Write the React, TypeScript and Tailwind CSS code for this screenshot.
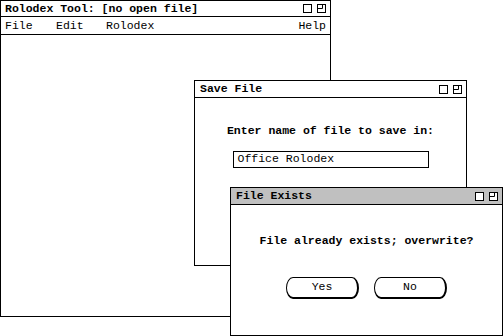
import React from "react";

const mono = { fontFamily: '"Liberation Mono", "DejaVu Sans Mono", monospace' };

function WinIcons() {
  return (
    <div className="flex items-center gap-[5px] pr-[4px]">
      <svg width="9" height="9" viewBox="0 0 9 9" className="block">
        <rect x="0.5" y="0.5" width="8" height="8" fill="white" stroke="black" />
      </svg>
      <svg width="9" height="9" viewBox="0 0 9 9" className="block">
        <rect x="0.5" y="0.5" width="8" height="8" fill="white" stroke="black" />
        <path d="M0.5 4.5 H5.5 V0.5" fill="none" stroke="black" />
      </svg>
    </div>
  );
}

function TitleBar({ title, gray }: { title: string; gray?: boolean }) {
  return (
    <div
      className={
        "h-[17px] flex items-center justify-between border-b border-black pl-[5px] " +
        (gray ? "bg-[#c0c0c0]" : "bg-white")
      }
    >
      <span className="font-bold text-[11.5px] leading-none text-black">{title}</span>
      <WinIcons />
    </div>
  );
}

export default function App() {
  return (
    <div className="relative w-[503px] h-[336px] bg-white overflow-hidden text-black" style={mono}>
      {/* Main window */}
      <div className="absolute left-0 top-0 w-[331px] h-[317px] border border-black bg-white flex flex-col">
        <div className="h-[16px] flex items-center justify-between border-b border-black pl-[4px]">
          <span className="font-bold text-[11.5px] leading-none">Rolodex Tool: [no open file]</span>
          <WinIcons />
        </div>
        <div className="h-[18px] flex items-center border-b border-black pl-[4px] pr-[4px] text-[11.5px] leading-none">
          <span className="w-[51px]">File</span>
          <span className="w-[50px]">Edit</span>
          <span>Rolodex</span>
          <span className="ml-auto">Help</span>
        </div>
      </div>

      {/* Save File window */}
      <div className="absolute left-[194px] top-[80px] w-[273px] h-[186px] border border-black bg-white flex flex-col">
        <TitleBar title="Save File" />
        <div className="flex flex-col items-center pt-[27px]">
          <span className="font-bold text-[11.5px] leading-none">Enter name of file to save in:</span>
          <div className="mt-[14px] w-[196px] h-[17px] border border-black flex items-center pl-[4px] text-[11.5px] leading-none">
            Office Rolodex
          </div>
        </div>
      </div>

      {/* File Exists window */}
      <div className="absolute left-[230px] top-[187px] w-[273px] h-[149px] border border-black bg-white flex flex-col">
        <TitleBar title="File Exists" gray />
        <div className="flex flex-col items-center pt-[30px]">
          <span className="font-bold text-[11.5px] leading-none">File already exists; overwrite?</span>
          <div className="mt-[30px] flex gap-[15px]">
            <button className="w-[73px] h-[22px] border border-black border-b-2 border-r-2 rounded-[7px/11px] bg-white text-[11.5px] leading-none flex items-center justify-center">
              Yes
            </button>
            <button className="w-[73px] h-[22px] border border-black border-b-2 border-r-2 rounded-[7px/11px] bg-white text-[11.5px] leading-none flex items-center justify-center">
              No
            </button>
          </div>
        </div>
      </div>
    </div>
  );
}
